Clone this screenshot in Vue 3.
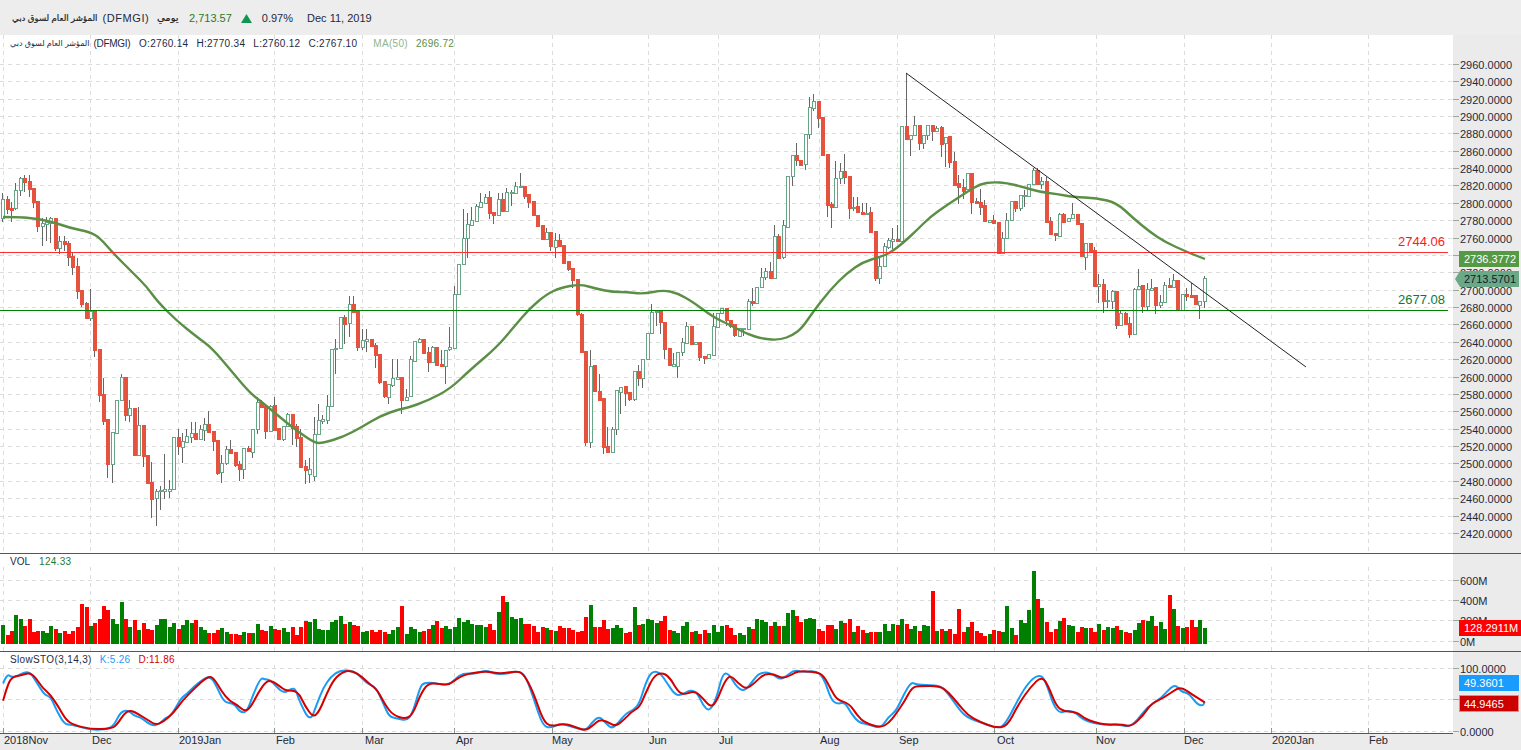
<script setup>
const candleData = `u 199 218 193 221;d 199 209 196 213;d 208 210 202 221;u 190 208 183 209;u 178 190 177 195;d 178 182 175 191;d 181 189 175 196;d 188 202 188 207;d 201 226 201 231;u 223 226 218 245;u 222 224 217 240;u 218 223 217 242;d 218 248 218 250;u 241 248 236 253;d 241 244 236 250;d 243 257 241 265;d 256 267 253 274;d 266 291 258 298;d 290 304 290 306;d 303 318 302 318;u 311 318 289 320;d 311 350 310 356;d 349 395 349 401;d 394 421 378 424;d 419 464 419 477;u 432 464 432 482;u 400 433 400 433;u 377 400 374 400;d 377 415 377 420;u 408 415 400 421;d 408 455 408 455;u 425 455 407 455;d 425 456 425 466;d 455 483 455 483;d 482 499 462 517;u 491 498 489 525;u 490 491 486 509;u 489 491 454 498;u 489 491 480 497;u 437 489 437 489;d 437 446 429 454;u 441 447 433 462;u 436 442 429 442;u 433 437 422 442;d 433 439 422 439;u 429 439 425 439;u 424 430 418 440;d 424 432 411 432;d 431 441 431 450;d 440 473 440 474;u 463 472 455 482;u 449 463 446 464;d 449 453 440 453;d 452 465 452 466;d 464 469 461 480;u 448 469 448 478;d 448 451 446 451;u 429 452 429 457;u 402 429 397 433;d 402 407 400 407;d 406 431 406 438;u 406 431 405 431;d 405 430 397 430;d 428 439 428 439;u 426 439 426 440;u 414 426 413 426;d 414 428 414 444;d 426 438 424 446;d 437 467 429 467;d 466 470 460 483;u 469 474 458 482;u 434 476 417 480;u 420 434 404 434;u 419 421 415 423;u 406 420 395 423;u 349 406 349 406;u 348 349 339 373;u 317 348 317 348;d 317 324 315 343;u 304 323 296 336;d 304 312 296 312;d 311 347 311 350;u 340 347 329 349;u 339 341 329 351;d 339 346 339 346;d 345 355 343 367;d 354 382 354 383;d 381 396 381 397;u 384 397 384 403;u 378 385 359 386;u 377 379 359 379;d 377 400 377 413;u 397 400 389 400;u 359 396 356 396;u 341 361 341 361;u 339 342 338 342;d 339 353 339 353;d 352 362 347 371;u 347 362 346 362;d 347 365 347 365;d 364 366 350 366;u 350 366 350 383;u 347 349 327 350;u 294 348 286 348;u 264 294 264 294;u 238 264 209 264;u 224 238 213 257;u 220 225 207 225;u 206 221 204 221;u 202 207 193 207;u 197 203 194 203;d 197 213 191 218;d 212 215 212 223;u 199 215 193 215;d 199 211 193 211;u 192 211 188 211;u 192 193 190 205;u 186 193 182 193;u 186 187 173 187;d 186 196 186 198;d 194 202 194 207;d 201 215 201 215;d 215 226 215 226;d 225 239 225 239;u 232 239 228 239;d 232 246 232 250;u 240 247 233 257;d 240 246 234 246;d 245 263 245 263;d 261 269 261 270;d 268 280 268 287;d 279 314 279 315;d 314 352 313 352;d 351 442 351 445;u 366 442 350 447;d 365 391 365 391;d 391 400 374 400;d 398 447 398 453;d 446 452 427 452;u 429 452 427 452;u 390 429 390 434;u 387 392 387 413;d 386 393 386 405;d 392 399 392 400;u 371 399 371 400;d 371 378 365 385;u 359 378 359 387;u 333 359 333 359;u 312 333 304 333;u 311 312 311 325;d 311 322 311 333;d 322 349 322 358;d 348 365 348 365;u 364 366 353 366;u 352 366 352 377;u 342 352 338 355;u 326 343 322 343;d 326 344 326 344;u 342 344 342 344;d 342 357 342 360;d 356 358 356 363;u 354 358 354 358;u 326 355 313 355;u 313 327 313 327;u 308 313 308 313;d 308 320 308 325;d 320 326 320 327;d 324 335 324 336;u 328 336 328 336;u 328 329 328 335;u 301 329 299 329;d 301 303 288 305;u 287 303 287 303;u 277 287 268 287;u 271 277 268 279;d 271 278 262 278;u 236 278 225 278;d 236 258 234 258;u 225 257 220 258;u 176 227 176 227;u 155 176 155 185;d 155 160 143 165;d 160 165 160 165;u 134 164 134 169;u 107 134 97 138;u 101 108 94 110;d 101 118 101 127;d 117 155 117 155;d 154 205 154 216;d 204 207 202 227;u 178 207 161 207;u 171 178 163 183;d 171 177 154 183;d 176 208 176 218;u 207 208 197 210;d 206 212 197 212;d 212 214 203 214;u 213 214 203 214;d 212 232 207 232;d 231 278 231 280;u 266 278 258 283;u 246 266 243 266;u 240 247 238 248;u 239 241 228 248;d 239 241 225 241;u 126 241 126 241;d 126 139 73 139;u 135 139 135 155;u 125 135 116 135;d 125 143 125 149;u 135 143 135 148;u 125 135 125 139;d 125 131 125 140;u 128 131 126 131;d 127 144 126 156;u 137 143 137 166;d 136 162 136 167;d 161 185 152 185;d 183 187 175 203;d 187 191 179 198;u 173 189 173 189;d 173 202 173 213;d 201 203 198 203;d 202 207 189 214;d 205 221 200 221;u 220 222 220 222;d 220 223 215 223;d 222 253 222 253;u 238 253 232 253;u 220 238 213 238;u 201 220 201 220;d 201 208 201 211;u 195 208 195 210;u 195 196 190 206;u 184 196 184 196;u 170 184 168 184;d 170 184 168 184;u 181 184 177 188;d 181 222 177 222;d 221 234 217 234;d 233 235 233 240;u 214 236 213 236;d 214 222 213 222;u 218 221 218 221;u 214 218 203 218;d 214 224 214 224;d 223 256 223 256;u 243 257 243 269;d 243 251 243 251;d 250 286 247 286;u 284 286 274 302;d 284 301 279 312;u 300 301 290 307;u 291 301 290 308;d 291 325 291 328;u 313 325 310 325;d 313 324 312 324;d 323 334 317 337;u 289 334 288 334;u 286 289 269 289;d 285 306 285 312;u 289 306 283 310;u 288 290 279 290;d 287 305 287 313;u 302 305 295 307;u 285 302 282 302;d 285 287 278 287;u 280 287 274 287;d 280 310 280 310;u 294 310 294 310;d 294 296 288 300;d 295 297 283 297;d 295 304 295 304;u 301 305 301 318;u 278 301 276 307`

const volHeights = [19,9,13,29,25,18,25,12,13,13,11,18,15,11,13,10,13,17,40,37,18,21,25,38,34,25,20,42,25,17,24,14,21,15,14,19,25,25,17,21,15,19,24,21,24,17,14,11,11,14,16,12,10,10,9,12,11,11,20,14,13,18,15,14,16,12,17,9,17,23,22,25,15,14,14,22,24,28,20,22,19,18,12,13,14,12,14,12,10,14,17,38,10,17,15,12,13,15,19,23,16,18,15,17,26,22,24,20,19,19,17,20,14,32,48,42,27,25,26,20,20,18,12,17,16,14,13,18,16,16,14,12,13,27,39,17,17,24,15,16,19,16,11,12,37,19,20,25,24,21,23,28,14,13,11,18,22,12,13,10,14,11,19,12,18,19,16,9,11,9,17,15,25,24,22,18,22,18,18,31,34,28,22,25,26,25,15,13,19,19,15,23,21,25,12,18,14,11,12,12,12,20,13,20,19,25,20,15,18,13,19,18,53,13,15,13,15,10,35,12,17,22,13,11,8,10,14,13,12,38,16,9,24,21,34,73,45,36,22,12,15,23,26,19,18,12,17,16,16,12,20,14,17,16,18,14,12,11,14,21,24,23,28,18,22,15,49,35,18,16,17,24,17,24,16]

const candles = candleData.split(';').map((row, i) => {
  const [dir, top, bot, wickTop, wickBot] = row.split(' ')
  return {
    up: dir === 'u',
    px: Math.round(3.2 + 4.385 * i),
    top: +top,
    bot: +bot,
    wickTop: +wickTop,
    wickBot: +wickBot,
    vol: volHeights[i] || 10
  }
})

const VOL_BOTTOM = 644

const smooth = pts => {
  let d = `M${pts[0][0]} ${pts[0][1]}`
  for (let i = 1; i < pts.length - 1; i++) {
    const mx = (pts[i][0] + pts[i + 1][0]) / 2
    const my = (pts[i][1] + pts[i + 1][1]) / 2
    d += ` Q${pts[i][0]} ${pts[i][1]} ${mx.toFixed(1)} ${my.toFixed(1)}`
  }
  const last = pts[pts.length - 1]
  return d + ` L${last[0]} ${last[1]}`
}

const maPath = smooth([[3,217],[17,217],[30,218],[50,221],[70,228],[90,232],[100,238],[113,253],[133,273],[147,287],[157,301],[177,321],[197,337],[212,348],[233,373],[250,393],[263,403],[287,423],[300,433],[315,443],[323,443],[343,437],[362,427],[380,416],[400,409],[407,408],[427,401],[450,389],[470,370],[497,347],[513,328],[530,308],[547,294],[560,288],[580,284],[597,289],[613,292],[627,292],[643,294],[663,290],[677,293],[693,302],[713,317],[730,325],[747,334],[763,339],[780,340],[793,335],[802,328],[813,312],[830,290],[847,273],[863,262],[880,257],[890,253],[903,243],[917,230],[930,217],[947,205],[967,192],[980,184],[993,182],[1007,183],[1023,187],[1040,192],[1057,194],[1073,197],[1097,198],[1117,203],[1133,218],[1150,232],[1165,242],[1187,252],[1205,259]])

const fromLeft = pts => pts.map(([x, y]) => [+(x / 2.57).toFixed(1), +(570 + y / 3).toFixed(1)])
const fromRight = pts => pts.map(([x, y]) => [+(600 + x / 2.53).toFixed(1), +(570 + y / 3).toFixed(1)])

const kPath = smooth([...fromLeft([[8,340],[18,312],[30,322],[45,318],[65,305],[80,310],[95,340],[115,375],[130,380],[145,420],[165,463],[185,465],[210,472],[235,480],[280,478],[295,462],[310,425],[330,420],[345,438],[360,440],[390,468],[410,462],[425,443],[440,437],[465,385],[480,372],[500,348],[520,330],[540,318],[555,345],[575,395],[590,398],[605,405],[618,428],[635,425],[650,375],[670,323],[680,328],[695,330],[710,350],[730,370],[750,355],[760,358],[770,395],[797,457],[815,400],[830,355],[850,320],[875,300],[910,303],[930,325],[945,342],[965,350],[985,400],[1000,440],[1020,445],[1045,452],[1060,430],[1080,350],[1090,338],[1115,338],[1140,345],[1160,340],[1180,315],[1200,310],[1220,312],[1250,300],[1270,312],[1300,312],[1330,303],[1350,315],[1370,380],[1395,470],[1420,473],[1440,460],[1470,470],[1505,482],[1520,460],[1540,438]]), ...fromRight([[15,460],[30,476],[45,460],[65,430],[85,420],[100,400],[115,340],[130,305],[150,305],[170,340],[190,375],[210,375],[225,360],[245,365],[260,405],[277,425],[295,385],[310,312],[325,310],[345,350],[365,365],[385,335],[400,312],[420,306],[440,315],[455,328],[470,320],[490,300],[515,307],[545,302],[565,320],[585,390],[600,402],[620,397],[635,430],[655,458],[680,463],[710,476],[730,440],[750,422],[770,370],[788,335],[800,345],[850,345],[870,355],[895,395],[920,435],[945,450],[975,462],[1005,475],[1025,465],[1065,372],[1090,330],[1110,315],[1125,325],[1155,432],[1185,420],[1205,430],[1225,452],[1275,465],[1305,462],[1340,472],[1360,450],[1385,410],[1420,385],[1453,340],[1470,365],[1490,370],[1510,402],[1525,408],[1530,395]])])

const dPath = smooth([...fromLeft([[8,392],[18,350],[30,322],[50,317],[75,308],[90,320],[110,355],[130,375],[150,410],[170,450],[190,465],[235,478],[285,476],[300,465],[320,430],[335,420],[355,432],[380,450],[400,465],[420,455],[445,430],[470,390],[500,355],[535,318],[550,325],[570,365],[590,393],[610,405],[630,425],[645,410],[665,365],[685,333],[700,333],[720,350],[735,362],[765,362],[785,410],[805,442],[820,425],[840,370],[860,325],[885,303],[905,302],[930,320],[950,342],[970,360],[990,405],[1010,435],[1040,447],[1060,435],[1080,375],[1100,340],[1130,342],[1155,345],[1175,325],[1200,312],[1250,303],[1285,312],[1325,303],[1345,310],[1370,365],[1395,450],[1415,470],[1450,460],[1480,472],[1505,482],[1525,465],[1540,450]]), ...fromRight([[15,452],[38,470],[60,450],[80,425],[100,412],[115,370],[135,320],[155,307],[175,320],[195,360],[210,375],[240,362],[260,385],[280,412],[295,395],[315,335],[330,315],[350,340],[370,358],[390,340],[415,312],[440,312],[460,325],[480,318],[500,303],[545,305],[565,315],[585,360],[600,390],[630,400],[650,435],[670,458],[710,473],[730,460],[750,430],[770,395],[790,350],[810,348],[860,348],[880,365],[905,400],[930,435],[960,455],[1000,473],[1030,470],[1060,400],[1090,350],[1118,318],[1135,350],[1155,410],[1175,425],[1205,425],[1225,445],[1250,457],[1280,465],[1320,463],[1345,470],[1375,435],[1395,400],[1425,385],[1460,355],[1475,355],[1500,375],[1530,397]])])

const priceLevels = []
for (let p = 2960; p >= 2420; p -= 20) {
  priceLevels.push({ label: `${p}.0000`, y: Math.round(237.6 + (2760 - p) * 0.8685) + 0.5 })
}
const volLevels = [
  { label: '600M', y: 580.5 },
  { label: '400M', y: 600.5 },
  { label: '200M', y: 620.5 },
  { label: '0M', y: 641.5 }
]
const stochLevels = [
  { label: '100.0000', y: 668.5 },
  { label: '50.0000', y: 699.5 },
  { label: '0.0000', y: 731.5 }
]
const monthLines = [3, 90, 178, 274, 362, 454, 552, 648, 718, 819, 897, 994, 1096, 1184, 1271, 1368].map(x => x + 0.5)
const dateLabels = [
  ['2018Nov', 4], ['Dec', 92], ['2019Jan', 179], ['Feb', 276], ['Mar', 365], ['Apr', 456], ['May', 552], ['Jun', 649],
  ['Jul', 719], ['Aug', 820], ['Sep', 899], ['Oct', 997], ['Nov', 1096], ['Dec', 1184], ['2020Jan', 1272], ['Feb', 1369]
]
</script>

<template>
  <div class="app">
    <header class="topbar">
      <span class="name"><span class="ar">المؤشر العام لسوق دبي</span> <span class="code">(DFMGI)</span></span>
      <span class="period">يومي</span>
      <span class="price">2,713.57</span>
      <svg class="arrow" width="11" height="9" viewBox="0 0 11 9"><path class="arrow-shape" d="M5.5 0L11 9H0Z" /></svg>
      <span class="pct">0.97%</span>
      <span class="date">Dec 11, 2019</span>
    </header>

    <section class="pane pane-main">
      <div class="plot">
        <svg class="canvas" width="1453" height="518" viewBox="0 35 1453 518">
          <g class="crisp">
            <line v-for="l in priceLevels" :key="l.label" class="grid" x1="0" x2="1453" :y1="l.y" :y2="l.y" />
            <line v-for="x in monthLines" :key="x" class="grid" :x1="x" :x2="x" y1="35" y2="553" />
          </g>
          <g class="crisp">
            <template v-for="(c, i) in candles" :key="i">
              <line class="wick" :x1="c.px - 0.5" :x2="c.px - 0.5" :y1="c.wickTop" :y2="c.wickBot + 1" />
              <rect v-if="c.up" class="body-up" :x="c.px - 1.5" :y="c.top + 0.5" width="3" :height="c.bot - c.top" />
              <rect v-else class="body-down" :x="c.px - 2" :y="c.top" width="4" :height="c.bot - c.top + 1" />
            </template>
          </g>
          <path class="ma" :d="maPath" />
          <line class="level-red" x1="0" x2="1448" y1="252.5" y2="252.5" />
          <line class="level-green" x1="0" x2="1448" y1="310.5" y2="310.5" />
          <line class="trend" x1="906" y1="73" x2="1306" y2="367" />
          <text class="level-text red-text" x="1445" y="246">2744.06</text>
          <text class="level-text green-text" x="1445" y="304">2677.08</text>
        </svg>
        <div class="legend legend-main">
          <span class="legend-name"><span class="legend-ar">المؤشر العام لسوق دبي</span> <span class="legend-code">(DFMGI)</span></span>
          <span>O:2760.14</span>
          <span>H:2770.34</span>
          <span>L:2760.12</span>
          <span>C:2767.10</span>
          <span class="ma-label">MA(50)</span>
          <span class="ma-value">2696.72</span>
        </div>
      </div>
      <svg class="axis" width="68" height="518" viewBox="1453 35 68 518">
        <g v-for="l in priceLevels" :key="l.label">
          <line class="tick crisp" x1="1453" x2="1459" :y1="l.y" :y2="l.y" />
          <text class="axis-text" x="1460" :y="l.y + 4">{{ l.label }}</text>
        </g>
        <rect class="tag-ma" x="1459" y="251" width="60" height="16" />
        <text class="tag-text" x="1464" y="263">2736.3772</text>
        <path class="tag-last" d="M1455 279L1460 271H1519V287H1460Z" />
        <text class="tag-text-dark" x="1464" y="283">2713.5701</text>
      </svg>
    </section>

    <section class="pane pane-vol">
      <div class="plot">
        <svg class="canvas" width="1453" height="97" viewBox="0 554 1453 97">
          <g class="crisp">
            <line v-for="l in volLevels" :key="l.label" class="grid" x1="0" x2="1453" :y1="l.y" :y2="l.y" />
            <line v-for="x in monthLines" :key="x" class="grid" :x1="x" :x2="x" y1="567" y2="651" />
            <rect v-for="(c, i) in candles" :key="i" :class="c.up ? 'bar-up' : 'bar-down'" :x="c.px - 2" :y="VOL_BOTTOM - c.vol" width="4" :height="c.vol" />
          </g>
        </svg>
        <div class="legend legend-sub">
          <span class="vol-name">VOL</span>
          <span class="vol-value">124.33</span>
        </div>
      </div>
      <svg class="axis" width="68" height="97" viewBox="1453 554 68 97">
        <g v-for="l in volLevels" :key="l.label">
          <line class="tick crisp" x1="1453" x2="1459" :y1="l.y" :y2="l.y" />
          <text class="axis-text" x="1460" :y="l.y + 4">{{ l.label }}</text>
        </g>
        <rect class="tag-red" x="1459" y="620" width="62" height="16" />
        <text class="tag-text" x="1464" y="632">128.2911M</text>
      </svg>
    </section>

    <section class="pane pane-stoch">
      <div class="plot">
        <svg class="canvas" width="1453" height="81" viewBox="0 652 1453 81">
          <g class="crisp">
            <line v-for="l in stochLevels" :key="l.label" class="grid" x1="0" x2="1453" :y1="l.y" :y2="l.y" />
            <line v-for="x in monthLines" :key="x" class="grid" :x1="x" :x2="x" y1="665" y2="728" />
            <line v-for="x in monthLines" :key="'t' + x" class="date-tick" :x1="x" :x2="x" y1="728" y2="733" />
          </g>
          <path class="stoch-k" :d="kPath" />
          <path class="stoch-d" :d="dPath" />
        </svg>
        <div class="legend legend-sub legend-stoch">
          <span class="stoch-name">SlowSTO(3,14,3)</span>
          <span class="k-value">K:5.26</span>
          <span class="d-value">D:11.86</span>
        </div>
      </div>
      <svg class="axis" width="68" height="81" viewBox="1453 652 68 81">
        <g v-for="l in stochLevels" :key="l.label">
          <line class="tick crisp" x1="1453" x2="1459" :y1="l.y" :y2="l.y" />
          <text class="axis-text" x="1460" :y="l.y + 4">{{ l.label }}</text>
        </g>
        <rect class="tag-blue" x="1459" y="675" width="60" height="16" />
        <text class="tag-text" x="1464" y="687">49.3601</text>
        <rect class="tag-darkred" x="1459.5" y="695.5" width="59" height="16" />
        <text class="tag-text" x="1464" y="708">44.9465</text>
      </svg>
    </section>

    <footer class="dates">
      <svg class="canvas" width="1521" height="16" viewBox="0 734 1521 16">
        <text v-for="d in dateLabels" :key="d[0] + d[1]" class="axis-text" :x="d[1]" y="745">{{ d[0] }}</text>
      </svg>
    </footer>
  </div>
</template>

<style>
html, body { margin: 0; overflow: hidden; }
</style>

<style scoped>
.app {
  width: 1521px;
  height: 750px;
  display: flex;
  flex-direction: column;
  background: #ebebeb;
  overflow: hidden;
  font-family: "Liberation Sans", "DejaVu Sans", sans-serif;
  font-size: 11px;
  color: #1e2a44;
}
.topbar {
  height: 35px;
  flex: none;
  display: flex;
  align-items: center;
  padding-left: 12px;
  background: #ededed;
  font-size: 11px;
  white-space: nowrap;
}
.name { width: 133px; display: flex; align-items: center; gap: 5px; }
.ar { font-size: 8.6px; color: #222; -webkit-text-stroke: 0.2px #222; }
.code { letter-spacing: 0.6px; }
.period { margin-left: 12px; width: 19px; font-size: 10px; color: #222; -webkit-text-stroke: 0.2px #222; }
.price { margin-left: 13px; color: #2a7a2a; }
.arrow { margin-left: 9px; margin-top: 1px; }
.arrow-shape { fill: #0f9650; }
.pct { margin-left: 10px; }
.date { margin-left: 14px; }

.pane { display: grid; grid-template-columns: 1453px 68px; flex: none; border-bottom: 1px solid #555; }
.pane-main { height: 518px; }
.pane-vol { height: 97px; }
.pane-stoch { height: 81px; border-bottom: none; }
.plot { position: relative; background: #fff; overflow: hidden; }
.pane-stoch .plot { border-bottom: 1px solid #555; height: 81px; }
.canvas, .axis { display: block; }
.axis { background: #ebebeb; overflow: visible; }
.crisp { shape-rendering: crispEdges; }

.grid { stroke: #dcdcdc; stroke-width: 1; stroke-dasharray: 4 4; }
.wick { stroke: #666; stroke-width: 1; }
.body-up { fill: #fff; stroke: #68a586; stroke-width: 1; }
.body-down { fill: #e5533f; }
.ma { fill: none; stroke: #5a8f45; stroke-width: 2.4; stroke-linejoin: round; }
.level-red { stroke: #ff2d2d; stroke-width: 1; }
.level-green { stroke: #008000; stroke-width: 1; }
.trend { stroke: #222; stroke-width: 1; }
.level-text { font-size: 13px; text-anchor: end; }
.red-text { fill: #ff1a1a; }
.green-text { fill: #0a7a3a; }
.bar-up { fill: #008000; }
.bar-down { fill: #ff0000; }
.date-tick { stroke: #8a9a8a; stroke-width: 1; }
.stoch-k { fill: none; stroke: #1a9cf5; stroke-width: 2; stroke-linejoin: round; }
.stoch-d { fill: none; stroke: #d40000; stroke-width: 2; stroke-linejoin: round; }

.tick { stroke: #9aaa9a; stroke-width: 1; }
.axis-text { font-size: 11px; fill: #1e2a3a; }
.tag-text { font-size: 11px; fill: #fff; }
.tag-text-dark { font-size: 11px; fill: #10202a; }
.tag-ma { fill: #559944; }
.tag-last { fill: #6aa888; }
.tag-red { fill: #ff0000; }
.tag-blue { fill: #1a9cff; }
.tag-darkred { fill: #cc0000; stroke: #ee8888; stroke-width: 1; }

.legend {
  position: absolute;
  left: 10px;
  display: flex;
  align-items: center;
  white-space: nowrap;
  font-size: 10px;
  letter-spacing: 0.3px;
}
.legend-main { top: 1px; height: 14px; gap: 8px; }
.legend-name { width: 121px; display: flex; align-items: center; gap: 4px; }
.legend-ar { font-size: 8px; letter-spacing: 0; }
.legend-code { letter-spacing: -0.3px; }
.ma-label { margin-left: 8px; color: #8fb48a; }
.ma-value { color: #5a8f45; }
.legend-sub { top: 0; height: 14px; gap: 9px; letter-spacing: 0.3px; }
.legend-stoch { gap: 8px; }
.vol-name { letter-spacing: 0; }
.vol-value { color: #1f7a3a; }
.stoch-name { letter-spacing: 0.35px; }
.k-value { color: #1a9cf5; }
.d-value { color: #d40000; }

.dates { height: 16px; flex: none; }
</style>
